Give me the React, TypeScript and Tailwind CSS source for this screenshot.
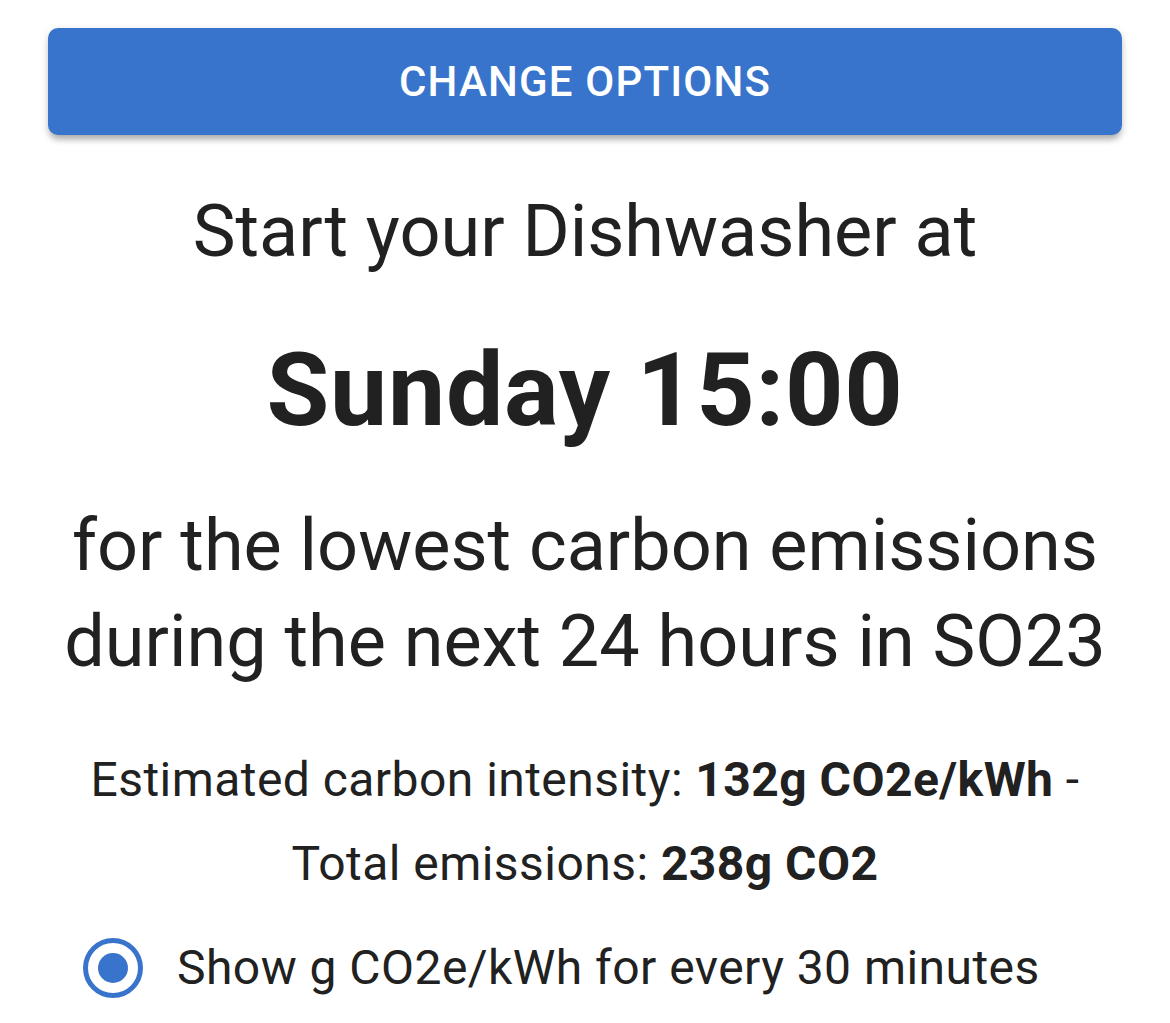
export default function App() {
  return (
    <div
      className="min-h-[1023px] bg-white text-[#212121]"
      style={{ fontFamily: 'Roboto, "Liberation Sans", sans-serif' }}
    >
      <div className="px-12 pt-7">
        <button className="flex h-[107px] w-full items-center justify-center rounded-[10px] bg-[#3874cb] text-[42px] font-medium uppercase tracking-[1.2px] text-white shadow-[0_6px_6px_-2px_rgba(0,0,0,0.25),0_3px_10px_0_rgba(0,0,0,0.14)]">
          Change options
        </button>
      </div>

      <div className="mt-[49px] flex flex-col items-center text-center">
        <h2 className="text-[72px] leading-[96px]">Start your Dishwasher at</h2>
        <h1 className="mt-[47px] text-[102px] font-bold leading-[126px] tracking-[0.75px]">Sunday 15:00</h1>
        <p className="mt-[45px] text-[72px] leading-[96px]">
          for the lowest carbon emissions
          <br />
          during the next 24 hours in SO23
        </p>
        <p className="mt-[48px] px-[40px] text-[48px] leading-[84px] tracking-[0.45px]">
          Estimated carbon intensity: <span className="font-bold">132g CO2e/kWh</span> -
          <br />
          Total emissions: <span className="font-bold">238g CO2</span>
        </p>
      </div>

      <label className="mt-[26px] flex h-[72px] items-center gap-[34px] pl-[83px]">
        <span className="flex h-[60px] w-[60px] items-center justify-center rounded-full border-[5px] border-[#3874cb]">
          <span className="h-[30px] w-[30px] rounded-full bg-[#3874cb]" />
        </span>
        <span className="text-[48px] leading-[72px] tracking-[0.45px]">Show g CO2e/kWh for every 30 minutes</span>
      </label>
    </div>
  )
}
